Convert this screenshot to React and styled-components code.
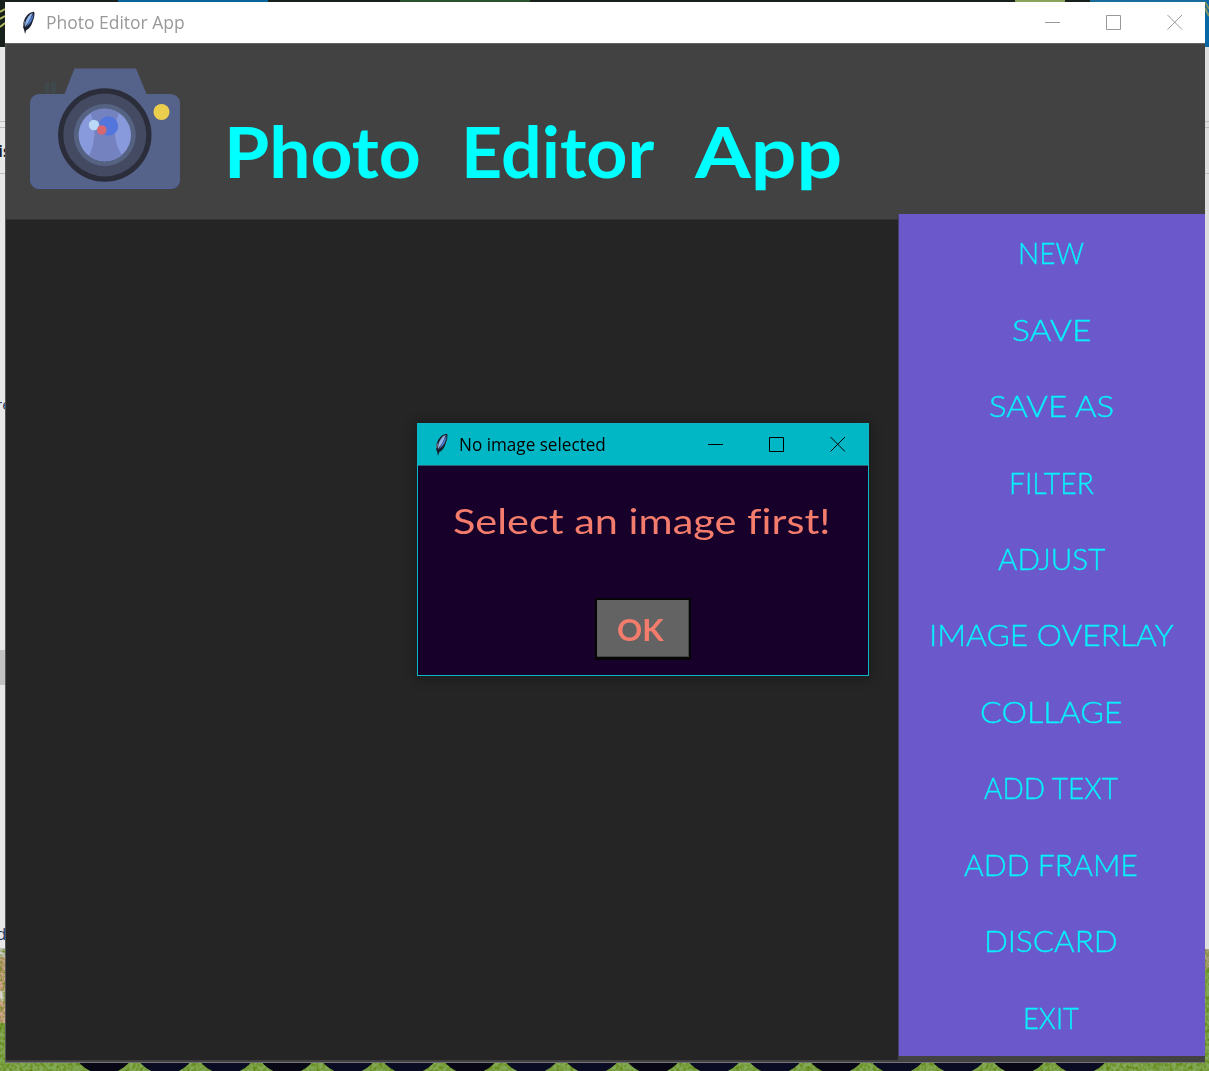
import React, { useLayoutEffect, useRef, useState } from "react";
import styled, { createGlobalStyle } from "styled-components";

const GlobalStyle = createGlobalStyle`
  * { box-sizing: border-box; }
  body { margin: 0; overflow: hidden; background: #79a04b; }
`;

const geometric = `Lato, "Open Sans", "Liberation Sans", sans-serif`;
const system = `"Open Sans", "Noto Sans", "Liberation Sans", sans-serif`;

const Desktop = styled.div`
  position: relative;
  display: grid;
  grid-template-columns: 5px 1200px 4px;
  grid-template-rows: 1063px 8px;
  width: 1209px;
  height: 1071px;
  overflow: hidden;
`;

const Wallpaper = styled.svg`
  position: absolute;
  inset: 0;
`;

const Edge = styled.div`
  position: relative;
  display: flex;
  flex-direction: column;
  overflow: hidden;
  padding-top: 47px;
`;

const Strip = styled.div`
  flex: none;
  height: ${(p) => p.$h}px;
  background: ${(p) => p.$tone || "#e8e8e8"};
  border-bottom: ${(p) => (p.$line ? "1px solid #bdbdbd" : "0")};
  font: ${(p) => (p.$bold ? 700 : 400)} ${(p) => p.$size || 15}px / ${(p) => p.$h}px ${system};
  color: ${(p) => p.$ink || "#222"};
  white-space: nowrap;
`;

const Nudge = styled.span`
  margin-left: ${(p) => p.$x}px;
`;

const Window = styled.main`
  position: relative;
  display: flex;
  flex-direction: column;
  margin-top: 2px;
  height: 1061px;
  background: #424242;
  border-bottom: 1px solid #757575;
`;

const TitleBar = styled.header`
  display: flex;
  align-items: center;
  flex: none;
  height: ${(p) => p.$h}px;
  padding: 0 ${(p) => p.$right}px 0 ${(p) => p.$left}px;
  background: ${(p) => p.$bg};
  color: ${(p) => p.$ink};
  border-bottom: ${(p) => p.$rule || "0"};
`;

const Caption = styled.div`
  flex: 1;
  margin-left: 10px;
  padding-bottom: 2px;
  font: 400 17.6px / 24px ${system};
`;

const Controls = styled.div`
  display: flex;
  gap: 45px;
`;

const Main = styled.div`
  display: flex;
  flex: 1;
  min-height: 0;
  border-left: 1px solid #565656;
  border-top: 1px solid #626562;
`;

const Workspace = styled.section`
  display: flex;
  flex-direction: column;
  width: 892px;
  padding-bottom: 2px;
`;

const Banner = styled.div`
  display: flex;
  flex: none;
  height: 175px;
  padding: 24px 0 0 24.4px;
`;

const Heading = styled.h1`
  display: flex;
  margin: 40px 0 0 ${(p) => p.$left}px;
  font: 700 71px / 86px ${geometric};
  color: #00ffff;
`;

const Word = styled.span`
  width: ${(p) => p.$w}px;
`;

const Canvas = styled.div`
  flex: 1;
  background: #252525;
  border-top: 1px solid #333;
`;

const Side = styled.aside`
  display: flex;
  flex: 1;
  padding: 170px 0 6px;
`;

const Menu = styled.nav`
  display: flex;
  flex-direction: column;
  flex: 1;
  padding-top: 1px;
  background: #6b59cc;
  border-left: 1px solid #45406c;
`;

const MenuButton = styled.button`
  height: 76.5px;
  padding: 0 2px 0 0;
  border: 0;
  background: none;
  color: #08f0fb;
  font: 300 29.3px / 36px ${geometric};
  -webkit-text-stroke: 0.35px #08f0fb;
`;

const Dialog = styled.section`
  position: absolute;
  left: 412px;
  top: 421px;
  width: 452px;
  height: 253px;
  display: flex;
  flex-direction: column;
  border: 1px solid #0bb7c5;
  background: #17002a;
  box-shadow: 0 1px 10px 3px rgba(0, 0, 0, 0.24);
`;

const DialogBody = styled.div`
  display: flex;
  flex: 1;
  flex-direction: column;
  align-items: center;
  padding-top: 33px;
`;

const Message = styled.p`
  margin: 0 3px 0 0;
  color: #f47c6c;
  font: 400 35px / 42px ${geometric};
`;

const OkButton = styled.button`
  width: 96px;
  height: 62px;
  margin: 57px 1px 0 0;
  padding: 0 5px 0 0;
  border: 2px solid #050505;
  border-bottom-width: 3px;
  background: #636363;
  box-shadow: inset -1px -1px #464646;
  color: #f47c6c;
  font: 700 30.5px / 36px ${geometric};
`;

const FitBox = styled.span`
  display: inline-block;
  width: ${(p) => p.$w}px;
  text-align: left;
`;

const FitText = styled.span`
  display: inline-block;
  white-space: pre;
  font-variant-ligatures: none;
  transform-origin: 0 50%;
`;

/* Widens or narrows a label's letterforms until they fill `width`. */
function Fitted({ width, children }) {
  const ref = useRef(null);
  const [scale, setScale] = useState(1);
  useLayoutEffect(() => {
    setScale(width / ref.current.offsetWidth);
  }, [width, children]);
  return (
    <FitBox $w={width}>
      <FitText ref={ref} style={{ transform: `scaleX(${scale})` }}>
        {children}
      </FitText>
    </FitBox>
  );
}

const Feather = () => (
  <svg width="15" height="24" viewBox="0 0 15 24">
    <path d="M13 .8C9 1 5.500 4 3.500 8.500 1.800 12.400 1.500 16 3.200 19L4 23 5.200 19.200C8.600 17.500 10.500 14.500 11.500 11 13 7.500 14.200 3 13 .8Z" fill="#181d29" />
    <path d="M11.900 1.800C8.300 3.500 5.500 7.200 4.400 11L3.900 16.200 8.400 10Z" fill="#8fb4e8" />
    <path d="M12.700 2.500C12.300 7 10.800 10.300 8.800 12.800L5.200 16 9.500 7.500Z" fill="#4a78c6" />
    <path d="M3.400 10.500 2.700 15" stroke="#8c96a8" />
  </svg>
);

const WindowControls = () => (
  <Controls>
    {["M0 8.500H15", "M.5 1.500H14.500V15.500H.5Z", "M.5 1 15 15.500M15 1 .5 15.500"].map((d) => (
      <svg key={d} width="16" height="17" viewBox="0 0 16 17">
        <path d={d} fill="none" stroke="currentColor" />
      </svg>
    ))}
  </Controls>
);

const Camera = () => (
  <svg width="151" height="122" viewBox="0 0 151 122">
    <path d="M15 14h4v11h-4zM21 14h5v11h-5z" fill="#3f484b" />
    <path d="M9 26H34.500L44.500.5H106L116.500 26H141a9 9 0 0 1 9 9v77a9 9 0 0 1-9 9H9a9 9 0 0 1-9-9V35a9 9 0 0 1 9-9Z" fill="#55628a" />
    <path d="M1 111a8 8 0 0 0 8 9.500H141a8 8 0 0 0 8-8" fill="none" stroke="#5262a0" />
    <circle cx="74.800" cy="67" r="46.700" fill="#2b2e3a" />
    <circle cx="74.800" cy="67" r="41.500" fill="#434a61" />
    <circle cx="74.800" cy="67" r="31" fill="#556282" />
    <circle cx="74.800" cy="67" r="26.200" fill="#889adb" />
    <path d="M60.500 45Q74 36 89 45 79 66 92 87.500 75 98.500 59 88 69 66 60.500 45Z" fill="#7482c0" />
    <circle cx="78.500" cy="58" r="9.700" fill="#5276dc" />
    <circle cx="64" cy="57" r="5.200" fill="#b9d9f7" />
    <circle cx="71.800" cy="62" r="4.800" fill="#d66872" />
    <circle cx="131.500" cy="44" r="8" fill="#ecce4f" />
  </svg>
);

const Backdrop = () => (
  <Wallpaper width="1209" height="1071">
    <defs>
      <filter id="grain" x="0" y="0" width="100%" height="100%">
        <feTurbulence type="fractalNoise" baseFrequency=".3" numOctaves="3" seed="4" />
        <feColorMatrix values="0 0 0 0 .1  0 0 0 0 .2  0 0 0 0 0  1.8 0 0 0 -.65" />
      </filter>
    </defs>
    <rect width="1209" height="1071" fill="#83aa56" />
    <rect y="949" width="5" height="74" fill="#cda38a" />
    <rect y="949" width="5" height="8" fill="#cfcfcf" />
    <rect y="991" width="5" height="10" fill="#d6d0c8" />
    <rect x="1205" y="949" width="4" height="20" fill="#b5a585" />
    <rect width="1209" height="1071" filter="url(#grain)" />
    {Array.from({ length: 17 }, (_, i) => (
      <circle key={i} cx={104 + i * 61} cy="1041" r="33" fill={i % 3 ? "#0a0c24" : "#070716"} />
    ))}
    <rect width="1209" height="47" fill="#17201b" />
    <rect x="118" width="150" height="2" fill="#08639b" />
    <rect x="400" width="130" height="2" fill="#29502f" />
    <rect x="1015" width="50" height="2" fill="#8ca35b" />
    <rect x="1090" width="119" height="2" fill="#176c9d" />
    <path d="M0 12 5 9M0 19 5 16M0 27 5 23" stroke="#b8bd60" strokeWidth="2" />
    <rect x="1205" width="4" height="47" fill="#0768a5" />
    <path d="M1205 2 1209 9M1205 8 1209 16" stroke="#82945e" strokeWidth="2" />
  </Wallpaper>
);

const title = [
  ["Photo", 197, 237],
  ["Editor", 193, 234.5],
  ["App", 147.5, 150],
];

const menu = [
  ["NEW", 66],
  ["SAVE", 79],
  ["SAVE AS", 125],
  ["FILTER", 85],
  ["ADJUST", 107],
  ["IMAGE OVERLAY", 245],
  ["COLLAGE", 143],
  ["ADD TEXT", 134],
  ["ADD FRAME", 174],
  ["DISCARD", 134],
  ["EXIT", 56],
];

export default function App() {
  return (
    <>
      <GlobalStyle />
      <Desktop>
        <Backdrop />
        <Edge>
          <Strip $h={75} $line />
          <Strip $h={6} $line />
          <Strip $h={46} $line $bold $size={16} $ink="#1b1b2b"><Nudge $x={-2}>is</Nudge></Strip>
          <Strip $h={220} />
          <Strip $h={20} $ink="#173d65"><Nudge $x={-4}>re</Nudge></Strip>
          <Strip $h={236} />
          <Strip $h={35} $tone="#c2c2c2" />
          <Strip $h={239} />
          <Strip $h={20} $size={17} $ink="#173d65"><Nudge $x={-4}>d</Nudge></Strip>
          <Strip $h={5} $line />
        </Edge>
        <Window>
          <TitleBar $h={41} $left={16} $right={22} $bg="#fff" $ink="#999">
            <Feather />
            <Caption><Fitted width={139}>Photo Editor App</Fitted></Caption>
            <WindowControls />
          </TitleBar>
          <Main>
            <Workspace>
              <Banner>
                <Camera />
                <Heading $left={42.5}>
                  {title.map(([word, width, step]) => (
                    <Word key={word} $w={step}><Fitted width={width}>{word}</Fitted></Word>
                  ))}
                </Heading>
              </Banner>
              <Canvas />
            </Workspace>
            <Side>
              <Menu>
                {menu.map(([label, width]) => (
                  <MenuButton key={label}><Fitted width={width}>{label}</Fitted></MenuButton>
                ))}
              </Menu>
            </Side>
          </Main>
          <Dialog>
            <TitleBar $h={42} $left={16} $right={22} $bg="#02b7c5" $ink="#000" $rule="1px solid #315e73">
              <Feather />
              <Caption><Fitted width={147}>No image selected</Fitted></Caption>
              <WindowControls />
            </TitleBar>
            <DialogBody>
              <Message><Fitted width={378}>Select an image first!</Fitted></Message>
              <OkButton><Fitted width={47}>OK</Fitted></OkButton>
            </DialogBody>
          </Dialog>
        </Window>
        <Edge>
          <Strip $h={75} $line $tone="#dedede" />
          <Strip $h={6} $line $tone="#dedede" />
          <Strip $h={46} $line $tone="#dedede" />
          <Strip $h={775} $tone="#dedede" />
        </Edge>
      </Desktop>
    </>
  );
}
